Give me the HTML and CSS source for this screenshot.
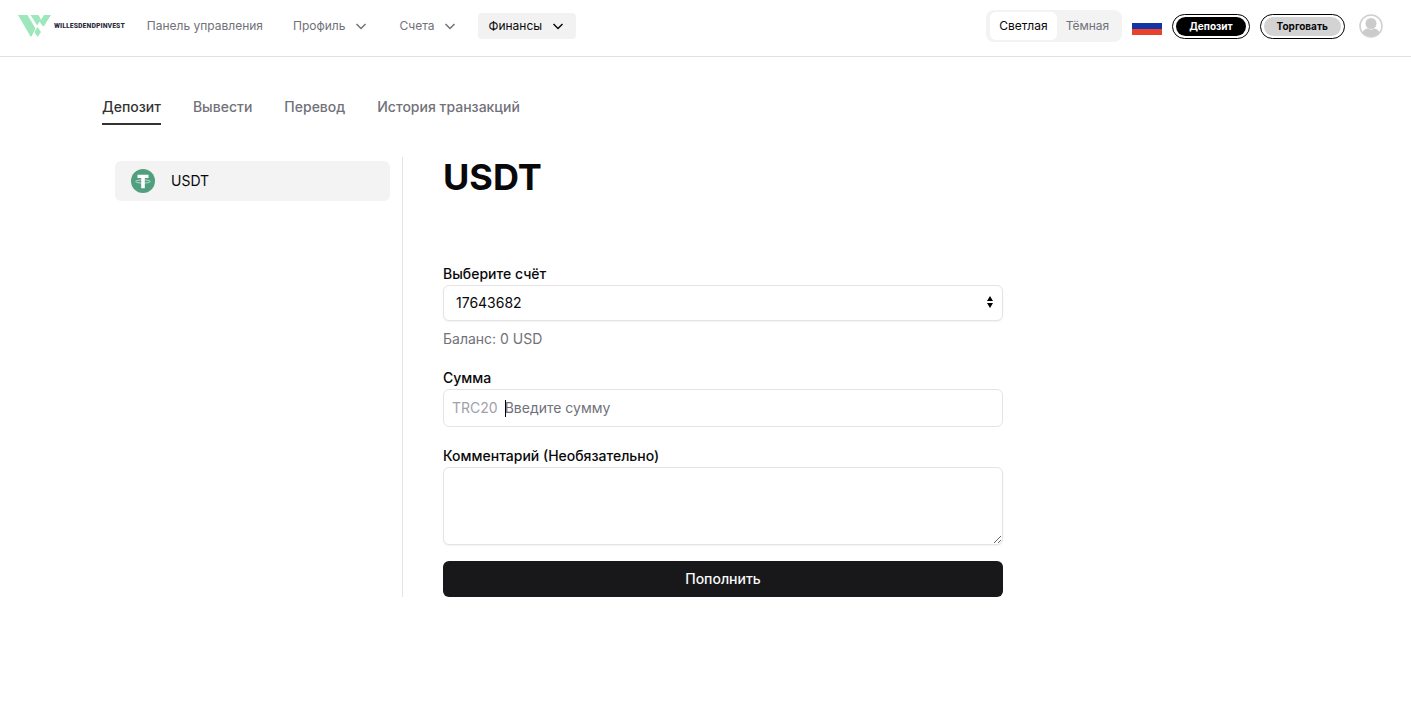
FILE: index.html
```html
<!DOCTYPE html>
<html lang="ru">
<head>
    <meta charset="UTF-8">
    <meta name="viewport" content="width=device-width, initial-scale=1.0">
    <title>Депозит</title>
    <link rel="stylesheet" href="styles.css">
</head>
<body>
    <header class="header">
        <a href="#" class="logo">
            <svg class="logo-mark" viewBox="0 0 33 22" aria-hidden="true">
                <path d="M0 0H9.500L17.500 13.500L13.500 21.500H12.500Z M12.500 0H20.500L23 4.500L19.200 10.500Z M26 0H33L26 11H24.500L21.800 6.800Z M19.600 12L23 17L19.600 22L16.400 17Z"/>
            </svg>
            <span class="logo-text">WILLESDENDPINVEST</span>
        </a>

        <nav class="nav">
            <a href="#" class="nav-link">Панель управления</a>
            <button type="button" class="nav-link has-menu">
                Профиль
                <svg class="chevron" viewBox="0 0 12 12"><path d="M1.500 4L6 8.500L10.500 4"/></svg>
            </button>
            <button type="button" class="nav-link has-menu">
                Счета
                <svg class="chevron" viewBox="0 0 12 12"><path d="M1.500 4L6 8.500L10.500 4"/></svg>
            </button>
            <button type="button" class="nav-link has-menu active">
                Финансы
                <svg class="chevron" viewBox="0 0 12 12"><path d="M1.500 4L6 8.500L10.500 4"/></svg>
            </button>
        </nav>

        <div class="header-right">
            <div class="theme-switch">
                <button type="button" class="theme-btn active">Светлая</button>
                <button type="button" class="theme-btn">Тёмная</button>
            </div>
            <button type="button" class="lang-btn" aria-label="Русский">
                <svg class="flag" viewBox="0 0 30 18">
                    <rect width="30" height="6" fill="#fff"/>
                    <rect y="6" width="30" height="6" fill="#1433a6"/>
                    <rect y="12" width="30" height="6" fill="#e8412c"/>
                </svg>
            </button>
            <a href="#" class="pill pill-dark"><span>Депозит</span></a>
            <a href="#" class="pill pill-light"><span>Торговать</span></a>
            <button type="button" class="avatar" aria-label="Аккаунт">
                <svg viewBox="0 0 24 24">
                    <circle cx="12" cy="12" r="11" fill="#fff" stroke="#cfcfcf" stroke-width="1.500"/>
                    <circle cx="12" cy="9.500" r="5.500" fill="#cbcbcb"/>
                    <path d="M3.500 18.500C4.500 16 7 14.500 9 14.500C11 16 13 16 15 14.500C17 14.500 19.500 16 20.500 18.500C18.500 21.200 15.500 22.700 12 22.700C8.500 22.700 5.500 21.200 3.500 18.500Z" fill="#cbcbcb"/>
                </svg>
            </button>
        </div>
    </header>

    <main class="page">
        <nav class="tabs">
            <a href="#" class="tab active">Депозит</a>
            <a href="#" class="tab">Вывести</a>
            <a href="#" class="tab">Перевод</a>
            <a href="#" class="tab">История транзакций</a>
        </nav>

        <div class="content">
            <aside class="methods">
                <button type="button" class="method">
                    <svg class="method-icon" viewBox="0 0 24 24" aria-hidden="true">
                        <circle cx="12" cy="12" r="12" fill="#50a080"/>
                        <ellipse cx="12" cy="12.500" rx="7.200" ry="1.600" fill="none" stroke="#fff" stroke-width="0.600"/>
                        <path d="M6.500 5.800H17.500V9H13.800V19.200H10.200V9H6.500Z" fill="#fff"/>
                    </svg>
                    USDT
                </button>
            </aside>

            <section class="deposit">
                <h1>USDT</h1>
                <form class="form">
                    <div class="form-group">
                        <label for="account">Выберите счёт</label>
                        <div class="select-wrap">
                            <select id="account" class="control">
                                <option>17643682</option>
                            </select>
                            <svg class="select-arrows" viewBox="0 0 6 12"><path d="M3 0L6 5H0Z M0 7H6L3 12Z"/></svg>
                        </div>
                        <p class="balance">Баланс: 0 USD</p>
                    </div>
                    <div class="form-group amount-group">
                        <label for="amount">Сумма</label>
                        <div class="amount-box">
                            <span class="amount-prefix">TRC20</span>
                            <div class="amount-field">
                                <span class="caret"></span>
                                <input type="text" id="amount" placeholder="Введите сумму">
                            </div>
                        </div>
                    </div>
                    <div class="form-group">
                        <label for="comment">Комментарий (Необязательно)</label>
                        <textarea id="comment" class="control"></textarea>
                    </div>
                    <button type="submit" class="submit-btn">Пополнить</button>
                </form>
            </section>
        </div>
    </main>
</body>
</html>
```
FILE: styles.css
```css
* {
    box-sizing: border-box;
}

body {
    margin: 0;
    font-family: Inter, "Liberation Sans", sans-serif;
    font-size: 14px;
    line-height: 20px;
    color: #09090b;
    background: #fff;
}

button,
input,
select,
textarea {
    font: inherit;
    color: inherit;
}

button {
    padding: 0;
    border: none;
    background: none;
    cursor: pointer;
}

a {
    color: inherit;
    text-decoration: none;
}

/* Header */
.header {
    display: flex;
    align-items: center;
    padding: 10px 28px 14px 18px;
    border-bottom: 1px solid #e0e0e0;
}

.logo {
    display: flex;
    align-items: center;
    gap: 3px;
}

.logo-mark {
    width: 33px;
    height: 22px;
    fill: #9ee6bb;
}

.logo-text {
    font-family: "Liberation Sans Narrow", "Roboto Condensed", Roboto, sans-serif;
    font-size: 8px;
    font-weight: 700;
    color: #2b2b3b;
}

.nav {
    display: flex;
    align-items: center;
    gap: 10px;
    margin-left: 12px;
}

.nav-link {
    display: flex;
    align-items: center;
    gap: 10px;
    padding: 3px 10px;
    border-radius: 4px;
    font-size: 12px;
    color: #71717a;
}

.nav-link.has-menu {
    padding-right: 12px;
}

.nav-link.active {
    color: #09090b;
    background: #f2f2f2;
}

.chevron {
    width: 12px;
    height: 12px;
    fill: none;
    stroke: currentColor;
    stroke-width: 1.5;
}

.header-right {
    display: flex;
    align-items: center;
    gap: 10px;
    margin-left: auto;
}

.theme-switch {
    display: flex;
    padding: 2px 4px;
    border-radius: 8px;
    background: #f3f3f3;
}

.theme-btn {
    padding: 4px 9px;
    border-radius: 6px;
    font-size: 12px;
    color: #71717a;
}

.theme-btn.active {
    color: #09090b;
    background: #fff;
}

.flag,
.avatar svg {
    display: block;
}

.flag {
    width: 30px;
    height: 18px;
}

.pill {
    padding: 2px 3px;
    border: 1px solid #000;
    border-radius: 13px;
    font-size: 10px;
    font-weight: 700;
    line-height: 19px;
}

.pill span {
    display: block;
    padding: 0 13px;
    border-radius: 10px;
}

.pill-dark span {
    color: #fff;
    background: #000;
}

.pill-light span {
    background: #d3d3d3;
}

.avatar {
    width: 24px;
    height: 24px;
    margin-left: 4px;
}

/* Page */
.page {
    padding: 40px 102px;
}

.tabs {
    display: flex;
    gap: 32px;
    font-weight: 500;
    color: #71717a;
}

.tab {
    padding-bottom: 6px;
    border-bottom: 2px solid transparent;
}

.tab.active {
    color: #333;
    border-color: #333;
}

.content {
    display: flex;
    margin-top: 32px;
}

.methods {
    width: 301px;
    padding: 4px 12px 0 13px;
    border-right: 1px solid #e4e4e7;
}

.method {
    display: flex;
    align-items: center;
    gap: 16px;
    width: 100%;
    padding: 8px 16px;
    border-radius: 6px;
    background: #f3f3f3;
}

.method-icon {
    width: 24px;
    height: 24px;
}

.deposit {
    flex: 1;
    max-width: 600px;
    padding-left: 40px;
}

h1 {
    margin: 0;
    font-size: 36px;
    line-height: 40px;
    font-weight: 700;
}

/* Form */
.form {
    display: flex;
    flex-direction: column;
    gap: 16px;
    margin-top: 68px;
}

.form-group {
    display: flex;
    flex-direction: column;
}

.form-group label {
    margin-bottom: 2px;
    font-weight: 500;
    line-height: 18px;
}

.control {
    display: block;
    width: 100%;
    padding: 7px 12px;
    border: 1px solid #e4e4e7;
    border-radius: 6px;
    background: #fff;
    box-shadow: 0 1px 2px rgba(0, 0, 0, 0.05);
    outline: none;
}

select.control {
    appearance: none;
}

textarea.control {
    height: 78px;
    resize: vertical;
}

.select-wrap {
    position: relative;
}

.select-arrows {
    position: absolute;
    top: 11px;
    right: 10px;
    width: 6px;
    height: 12px;
    pointer-events: none;
}

.balance {
    margin: 8px 0 4px;
    color: #71717a;
}

.amount-group {
    margin-bottom: 4px;
}

.amount-box {
    display: flex;
    align-items: center;
    gap: 7px;
    padding: 8px;
    border: 1px solid #e4e4e7;
    border-radius: 6px;
}

.amount-prefix {
    color: #a1a1aa;
}

.amount-field {
    position: relative;
    flex: 1;
}

.amount-field input {
    display: block;
    width: 100%;
    padding: 0;
    border: none;
    outline: none;
    background: none;
    caret-color: transparent;
}

.amount-field input::placeholder {
    color: #71717a;
}

.caret {
    position: absolute;
    top: 2px;
    left: 0;
    width: 1px;
    height: 17px;
    background: #000;
}

.submit-btn {
    padding: 8px 16px;
    border-radius: 6px;
    font-weight: 500;
    color: #fafafa;
    background: #18181b;
}
```
